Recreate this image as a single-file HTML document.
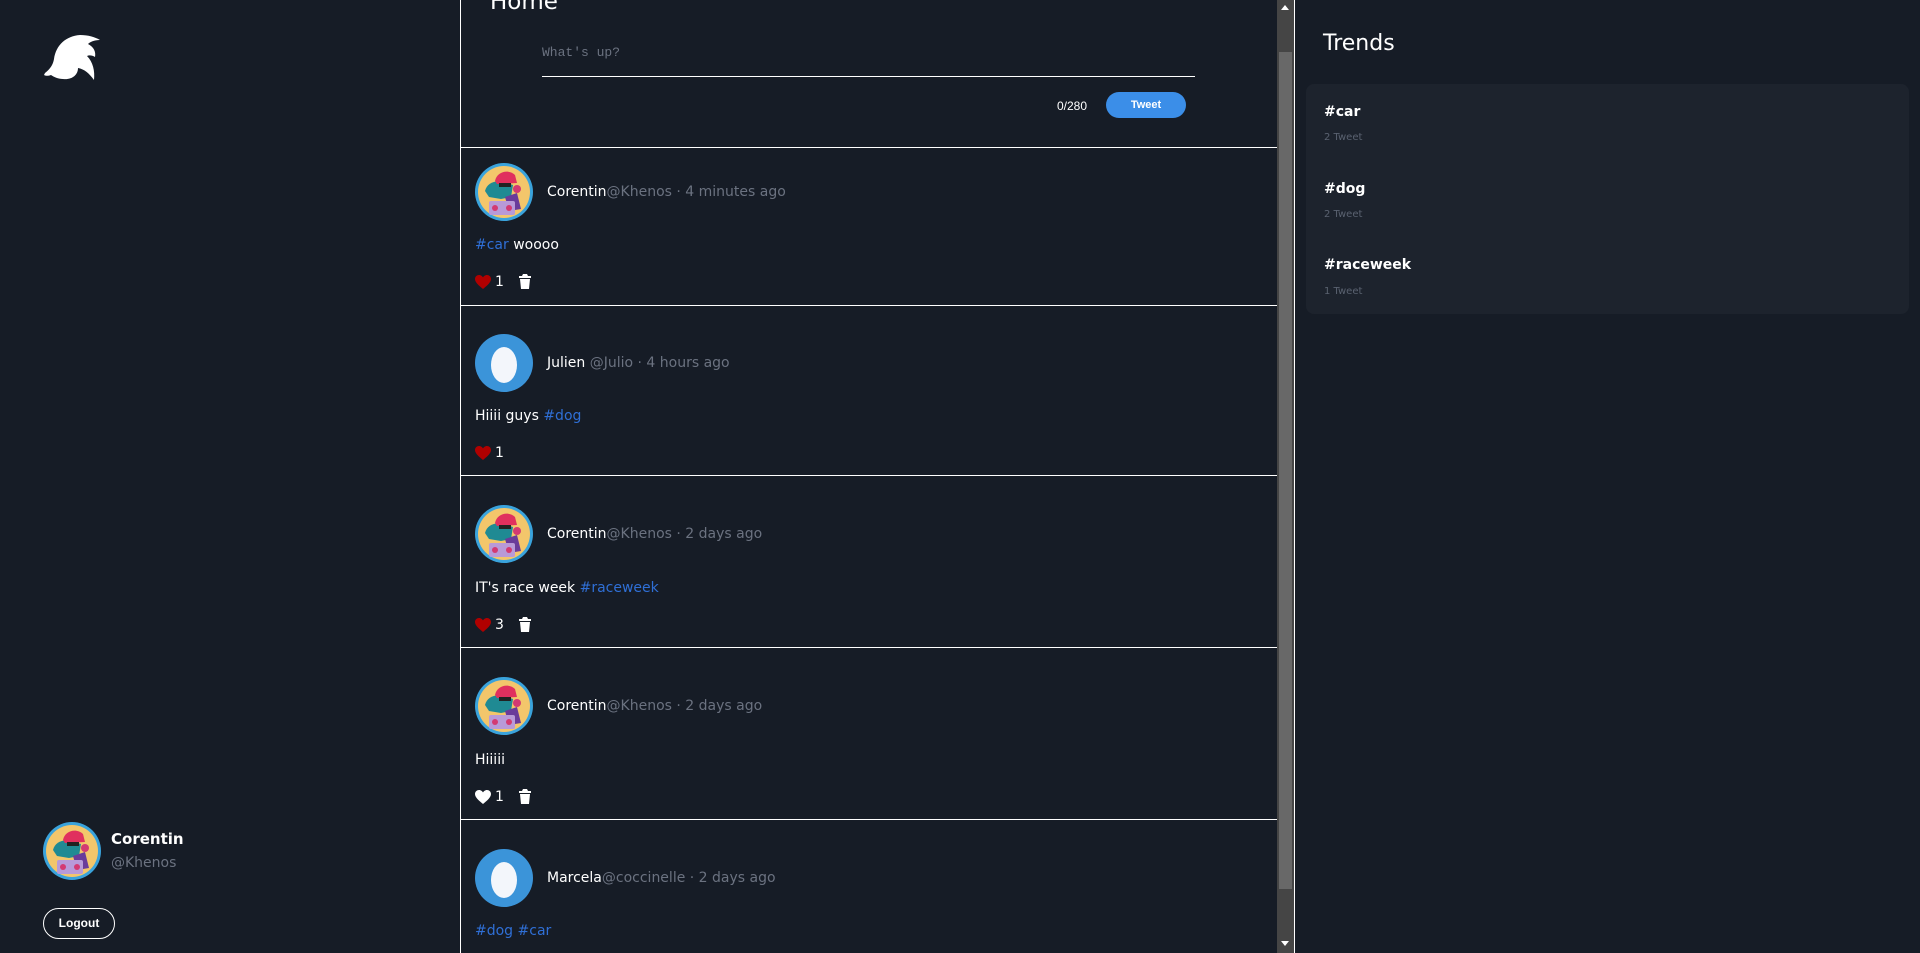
<!DOCTYPE html>
<html><head><meta charset="utf-8"><style>
*{box-sizing:border-box;margin:0;padding:0}
body{width:1920px;height:953px;overflow:hidden;background:#161c26;font-family:"DejaVu Sans","Liberation Sans",sans-serif;color:#fff;position:relative}
.abs{position:absolute}
.left{left:0;top:0;width:460px;height:953px}
.center{left:460px;top:0;width:817px;height:953px;border-left:1px solid #fff}
.sb{left:1277px;top:0;width:17px;height:953px;background:#454545}
.thumb{left:1279px;top:52px;width:13px;height:837px;background:#686868}
.rborder{left:1294px;top:0;width:1px;height:953px;background:#fff}
.sep{position:absolute;left:461px;width:816px;height:1px;background:#fff}
.name{font-size:14px;color:#fff}
.muted{color:#6b7280}
.tag{color:#2f6fd6}
.txt{font-size:14px}
.cnt{font-size:14px}
</style></head><body>
<div class="abs left">
<svg class="abs" style="left:44px;top:35px" width="57" height="46" viewBox="0 0 57 46"><path fill="#fff" d="M1 38 C6 34 9 30 10 24 C12 10 22 1 36 0 C44 0 51 2 56 5 C50 5 46 7 44 9 C50 12 52 17 51 22 C48 20 45 20 43 21 C49 27 51 36 50 45 C45 38 40 34 34 33 C34 40 28 45 19 44 C14 44 10 42 7 40 C4 41 2 41 0 40 Z"/></svg>
<svg class="abs" style="left:43px;top:822px" width="58" height="58" viewBox="0 0 58 58"><use href="#av"/></svg>
<div class="abs" style="left:111px;top:830px;font-size:15px;font-weight:bold">Corentin</div>
<div class="abs muted" style="left:111px;top:855px;font-size:14px">@Khenos</div>
<div class="abs" style="left:43px;top:908px;width:72px;height:31px;border:1px solid #fff;border-radius:16px;font-family:'Liberation Sans',sans-serif;font-weight:bold;font-size:12px;text-align:center;line-height:29px">Logout</div>
</div>
<svg width="0" height="0" style="position:absolute"><defs>
<g id="av"><circle cx="29" cy="29" r="29" fill="#3aa3dc"/><circle cx="29" cy="29" r="26" fill="#f3c66b"/>
<path d="M10 28 C12 20 20 17 28 19 L38 22 L36 34 L26 36 L14 34 Z" fill="#1f8a93"/>
<path d="M20 18 C22 8 34 6 40 12 L42 20 L22 21 Z" fill="#e0305e"/>
<rect x="24" y="20" width="12" height="4" fill="#222"/>
<circle cx="42" cy="26" r="4" fill="#d33a72"/>
<path d="M30 34 L42 30 L46 46 L34 48 Z" fill="#6a3b9a"/>
<rect x="14" y="38" width="26" height="14" rx="2" fill="#b89ad8"/>
<circle cx="20" cy="45" r="3" fill="#d33a72"/><circle cx="34" cy="45" r="3" fill="#d33a72"/></g>
<g id="egg"><circle cx="29" cy="29" r="29" fill="#3b94d9"/><ellipse cx="29" cy="31" rx="13" ry="18" fill="#f3f6fb"/></g>
<path id="heart" d="M8 14 C3 10 0 7 0 4 C0 1.5 2 0 4 0 C6 0 7.2 1.2 8 2.4 C8.8 1.2 10 0 12 0 C14 0 16 1.5 16 4 C16 7 13 10 8 14Z"/>
<path id="trash" d="M1 2 H4 L5 0 H9 L10 2 H13 V4 H1 Z M2 5 H12 L11 15 H3 Z" fill="#fff"/>
</defs></svg>

<div class="abs center">
<div class="abs" style="left:29px;top:-11px;font-size:23px">Home</div>
<div class="abs muted" style="left:81px;top:45px;font-family:'Liberation Mono',monospace;font-size:13px">What's up?</div>
<div class="abs" style="left:81px;top:76px;width:653px;height:1px;background:#fff"></div>
<div class="abs" style="left:596px;top:99px;font-size:12px;font-family:'Liberation Sans',sans-serif">0/280</div>
<div class="abs" style="left:645px;top:92px;width:80px;height:26px;border-radius:13px;background:#3b8ee8;font-family:'Liberation Sans',sans-serif;font-weight:bold;font-size:11px;text-align:center;line-height:26px">Tweet</div>
</div>
<div class="sep" style="top:147px"></div>
<div class="sep" style="top:305px"></div>
<div class="sep" style="top:475px"></div>
<div class="sep" style="top:647px"></div>
<div class="sep" style="top:819px"></div>

<svg class="abs" style="left:475px;top:163px" width="58" height="58"><use href="#av"/></svg>
<div class="abs name" style="left:547px;top:184px">Corentin<span class="muted">@Khenos · 4 minutes ago</span></div>
<div class="abs txt" style="left:475px;top:237px"><span class="tag">#car</span> woooo</div>
<svg class="abs" style="left:475px;top:275px" width="16" height="14"><use href="#heart" fill="#b00000"/></svg>
<div class="abs cnt" style="left:495px;top:274px">1</div>
<svg class="abs" style="left:518px;top:274px" width="14" height="15"><use href="#trash"/></svg>

<svg class="abs" style="left:475px;top:334px" width="58" height="58"><use href="#egg"/></svg>
<div class="abs name" style="left:547px;top:355px">Julien <span class="muted">@Julio · 4 hours ago</span></div>
<div class="abs txt" style="left:475px;top:408px">Hiiii guys <span class="tag">#dog</span></div>
<svg class="abs" style="left:475px;top:446px" width="16" height="14"><use href="#heart" fill="#b00000"/></svg>
<div class="abs cnt" style="left:495px;top:445px">1</div>

<svg class="abs" style="left:475px;top:505px" width="58" height="58"><use href="#av"/></svg>
<div class="abs name" style="left:547px;top:526px">Corentin<span class="muted">@Khenos · 2 days ago</span></div>
<div class="abs txt" style="left:475px;top:580px">IT's race week <span class="tag">#raceweek</span></div>
<svg class="abs" style="left:475px;top:618px" width="16" height="14"><use href="#heart" fill="#b00000"/></svg>
<div class="abs cnt" style="left:495px;top:617px">3</div>
<svg class="abs" style="left:518px;top:617px" width="14" height="15"><use href="#trash"/></svg>

<svg class="abs" style="left:475px;top:677px" width="58" height="58"><use href="#av"/></svg>
<div class="abs name" style="left:547px;top:698px">Corentin<span class="muted">@Khenos · 2 days ago</span></div>
<div class="abs txt" style="left:475px;top:752px">Hiiiii</div>
<svg class="abs" style="left:475px;top:790px" width="16" height="14"><use href="#heart" fill="#fff"/></svg>
<div class="abs cnt" style="left:495px;top:789px">1</div>
<svg class="abs" style="left:518px;top:789px" width="14" height="15"><use href="#trash"/></svg>

<svg class="abs" style="left:475px;top:849px" width="58" height="58"><use href="#egg"/></svg>
<div class="abs name" style="left:547px;top:870px">Marcela<span class="muted">@coccinelle · 2 days ago</span></div>
<div class="abs txt" style="left:475px;top:923px"><span class="tag">#dog #car</span></div>

<div class="abs sb"></div>
<div class="abs thumb"></div>
<div class="abs" style="left:1281px;top:5px;width:0;height:0;border-left:4px solid transparent;border-right:4px solid transparent;border-bottom:5px solid #fff"></div>
<div class="abs" style="left:1281px;top:941px;width:0;height:0;border-left:4px solid transparent;border-right:4px solid transparent;border-top:5px solid #fff"></div>
<div class="abs rborder"></div>

<div class="abs" style="left:1323px;top:31px;font-size:22px">Trends</div>
<div class="abs" style="left:1306px;top:84px;width:603px;height:230px;background:#1d232d;border-radius:8px">
<div class="abs" style="left:18px;top:20px;font-size:14px;font-weight:bold">#car</div>
<div class="abs muted" style="left:18px;top:48px;font-size:10px;color:#5a6270">2 Tweet</div>
<div class="abs" style="left:18px;top:97px;font-size:14px;font-weight:bold">#dog</div>
<div class="abs muted" style="left:18px;top:125px;font-size:10px;color:#5a6270">2 Tweet</div>
<div class="abs" style="left:18px;top:173px;font-size:14px;font-weight:bold">#raceweek</div>
<div class="abs muted" style="left:18px;top:202px;font-size:10px;color:#5a6270">1 Tweet</div>
</div>
</body></html>
